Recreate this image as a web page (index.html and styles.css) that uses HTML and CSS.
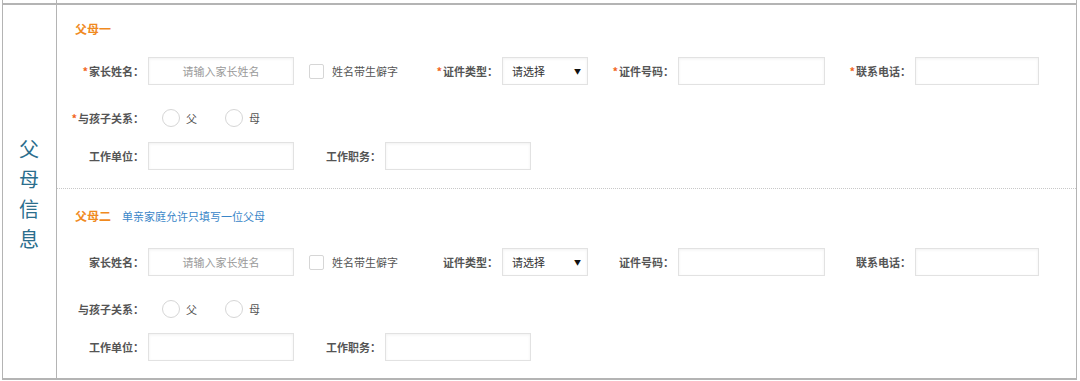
FILE: index.html
```html
<!DOCTYPE html>
<html lang="zh-CN">

<head>
    <meta charset="UTF-8" />
    <meta name="viewport" content="width=device-width, initial-scale=1.0" />
    <title>父母信息</title>
    <link rel="stylesheet" href="styles.css">
</head>

<body>
    <div class="form-table">
        <div class="table-row prev-row">
            <div class="row-head"></div>
            <div class="row-body"></div>
        </div>
        <div class="table-row info-row">
            <div class="row-head">
                <span class="head-text">父<br>母<br>信<br>息</span>
            </div>
            <div class="row-body">
                <div class="parent parent-first">
                    <div class="parent-title">父母一</div>
                    <div class="field-row">
                        <label class="label w91"><i>*</i>家长姓名：</label>
                        <input class="text w146" type="text" placeholder="请输入家长姓名">
                        <label class="check"><input type="checkbox"><span>姓名带生僻字</span></label>
                        <label class="label w90"><i>*</i>证件类型：</label>
                        <div class="select w86"><span>请选择</span><b>▼</b></div>
                        <label class="label w90"><i>*</i>证件号码：</label>
                        <input class="text w147" type="text">
                        <label class="label w90"><i>*</i>联系电话：</label>
                        <input class="text w124" type="text">
                    </div>
                    <div class="field-row">
                        <label class="label w91"><i>*</i>与孩子关系：</label>
                        <label class="radio"><input type="radio" name="rel1"><span>父</span></label>
                        <label class="radio"><input type="radio" name="rel1"><span>母</span></label>
                    </div>
                    <div class="field-row row-last">
                        <label class="label w91">工作单位：</label>
                        <input class="text w146" type="text">
                        <label class="label w91">工作职务：</label>
                        <input class="text w146" type="text">
                    </div>
                </div>
                <div class="parent parent-second">
                    <div class="parent-title">父母二<span class="tip">单亲家庭允许只填写一位父母</span></div>
                    <div class="field-row">
                        <label class="label w91">家长姓名：</label>
                        <input class="text w146" type="text" placeholder="请输入家长姓名">
                        <label class="check"><input type="checkbox"><span>姓名带生僻字</span></label>
                        <label class="label w90">证件类型：</label>
                        <div class="select w86"><span>请选择</span><b>▼</b></div>
                        <label class="label w90">证件号码：</label>
                        <input class="text w147" type="text">
                        <label class="label w90">联系电话：</label>
                        <input class="text w124" type="text">
                    </div>
                    <div class="field-row">
                        <label class="label w91">与孩子关系：</label>
                        <label class="radio"><input type="radio" name="rel2"><span>父</span></label>
                        <label class="radio"><input type="radio" name="rel2"><span>母</span></label>
                    </div>
                    <div class="field-row row-last">
                        <label class="label w91">工作单位：</label>
                        <input class="text w146" type="text">
                        <label class="label w91">工作职务：</label>
                        <input class="text w146" type="text">
                    </div>
                </div>
            </div>
        </div>
    </div>
</body>

</html>
```

FILE: styles.css
```css
* {
    margin: 0;
    padding: 0;
    box-sizing: border-box;
}

body {
    font-family: "Noto Sans CJK SC", "Noto Sans", sans-serif;
    font-size: 11px;
    color: #555;
    background: #fff;
}

.form-table {
    width: 1075px;
    margin-left: 2px;
    border-left: 1px solid #b4b4b4;
    border-right: 1px solid #b4b4b4;
}

.table-row {
    display: grid;
    grid-template-columns: 54px 1fr;
}

.row-head {
    border-right: 1px solid #b4b4b4;
    display: flex;
    align-items: center;
    justify-content: center;
}

.prev-row {
    height: 3px;
}

.info-row {
    border-top: 2px solid #b4b4b4;
    border-bottom: 2px solid #b4b4b4;
}

.head-text {
    font-size: 20px;
    line-height: 30px;
    color: #2b6e8d;
    text-align: center;
    margin-top: 4px;
    margin-right: 1px;
}

.parent {
    padding-bottom: 18px;
}

.parent-first {
    padding-top: 16px;
    border-bottom: 1px dotted #c8c8c8;
}

.parent-second {
    padding-top: 19px;
    padding-bottom: 17px;
}

.parent-title {
    font-size: 12px;
    line-height: 16px;
    font-weight: bold;
    color: #f08a1f;
    padding-left: 18px;
    margin-bottom: 20px;
}

.parent-second .parent-title {
    margin-bottom: 24px;
}

.tip {
    font-size: 11px;
    font-weight: normal;
    color: #3a86c8;
    margin-left: 11px;
}

.field-row {
    display: flex;
    align-items: center;
    height: 28px;
    margin-bottom: 19px;
}

.field-row + .field-row.row-last {
    margin-top: -9px;
}

.row-last {
    margin-bottom: 0;
}

.label {
    font-weight: bold;
    text-align: right;
    padding-right: 4px;
    flex-shrink: 0;
    white-space: nowrap;
}

.label i {
    font-style: normal;
    color: #f26522;
    margin-right: 1px;
}

.w91 { width: 91px; }
.w90 { width: 90px; }
.w86 { width: 86px; }
.w124 { width: 124px; }
.w146 { width: 146px; }
.w147 { width: 147px; }

.text,
.select {
    height: 28px;
    border: 1px solid #e2e2e2;
    background: #fff;
    box-shadow: inset 0 1px 3px rgba(0, 0, 0, 0.06);
    font-family: inherit;
    font-size: 11px;
    color: #333;
    flex-shrink: 0;
}

.text {
    text-align: center;
    outline: none;
}

.text::placeholder {
    color: #9a9a9a;
}

.select {
    display: flex;
    align-items: center;
    justify-content: space-between;
    padding: 0 6px 0 9px;
}

.select span {
    color: #333;
}

.select b {
    font-size: 7px;
    color: #111;
}

.check {
    width: 118px;
    display: flex;
    align-items: center;
    padding-left: 15px;
    flex-shrink: 0;
    white-space: nowrap;
}

.check input,
.radio input {
    appearance: none;
    -webkit-appearance: none;
    border: 1px solid #d6d6d6;
    background: #fff;
    flex-shrink: 0;
}

.check input {
    width: 15px;
    height: 15px;
    border-radius: 2px;
    margin-right: 8px;
}

.radio {
    display: flex;
    align-items: center;
    margin-left: 14px;
}

.radio + .radio {
    margin-left: 28px;
}

.radio input {
    width: 18px;
    height: 18px;
    border-radius: 50%;
    margin-right: 6px;
}
```
